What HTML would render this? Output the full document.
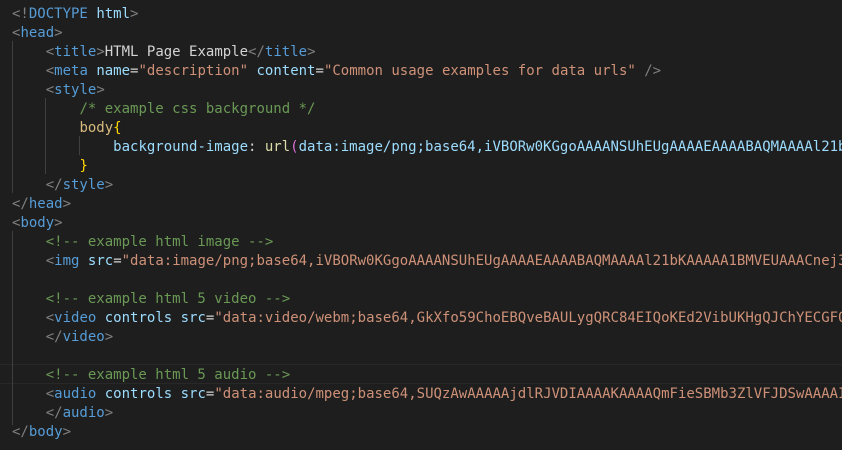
<!DOCTYPE html>
<html><head><style>
html,body{margin:0;padding:0;background:#1e1e1e;width:842px;height:450px;overflow:hidden}
pre{margin:0;padding:5px 0 0 12px;width:830px;height:445px;overflow:hidden;font-family:"DejaVu Sans Mono","Liberation Mono",monospace;font-size:14px;line-height:19px;color:#d4d4d4;white-space:pre;position:relative;z-index:2}
.b{color:#808080}.t{color:#569cd6}.a{color:#9cdcfe}.s{color:#ce9178}.c{color:#6a9955}.sel{color:#d7ba7d}.br{color:#ffd700}.f{color:#dcdcaa}.p{color:#da70d6}.u{color:#9cdcfe}
.g{position:absolute;width:1px;background:#404040;z-index:1}
.hl{position:absolute;left:0;right:0;top:364px;height:18px;border-top:1px solid #282828;border-bottom:1px solid #282828;z-index:0}
</style></head><body>
<div class="hl"></div>
<div class="g" style="left:12px;top:41px;height:152px"></div>
<div class="g" style="left:45px;top:98px;height:76px"></div>
<div class="g" style="left:79px;top:136px;height:19px"></div>
<div class="g" style="left:12px;top:231px;height:194px"></div>
<pre><span class="b">&lt;!</span><span class="t">DOCTYPE</span> <span class="a">html</span><span class="b">&gt;</span>
<span class="b">&lt;</span><span class="t">head</span><span class="b">&gt;</span>
    <span class="b">&lt;</span><span class="t">title</span><span class="b">&gt;</span>HTML Page Example<span class="b">&lt;/</span><span class="t">title</span><span class="b">&gt;</span>
    <span class="b">&lt;</span><span class="t">meta</span> <span class="a">name</span>=<span class="s">"description"</span> <span class="a">content</span>=<span class="s">"Common usage examples for data urls"</span> <span class="b">/&gt;</span>
    <span class="b">&lt;</span><span class="t">style</span><span class="b">&gt;</span>
        <span class="c">/* example css background */</span>
        <span class="sel">body</span><span class="br">{</span>
            <span class="a">background-image</span>: <span class="f">url</span><span class="p">(</span><span class="u">data:image/png;base64,iVBORw0KGgoAAAANSUhEUgAAAAEAAAABAQMAAAAl21bKAAAAA1BMVEUAAACnej3aAAAAAXRSTlMAQObYZgAAAApJREFUCNdjYAAAAAIAAeIhvDMAAAAASUVORK5CYII=</span><span class="p">)</span>;
        <span class="br">}</span>
    <span class="b">&lt;/</span><span class="t">style</span><span class="b">&gt;</span>
<span class="b">&lt;/</span><span class="t">head</span><span class="b">&gt;</span>
<span class="b">&lt;</span><span class="t">body</span><span class="b">&gt;</span>
    <span class="c">&lt;!-- example html image --&gt;</span>
    <span class="b">&lt;</span><span class="t">img</span> <span class="a">src</span>=<span class="s">"data:image/png;base64,iVBORw0KGgoAAAANSUhEUgAAAAEAAAABAQMAAAAl21bKAAAAA1BMVEUAAACnej3aAAAAAXRSTlMAQObYZgAAAApJREFUCNdjYAAAAAIAAeIhvDMAAAAASUVORK5CYII="</span>
 
    <span class="c">&lt;!-- example html 5 video --&gt;</span>
    <span class="b">&lt;</span><span class="t">video</span> <span class="a">controls</span> <span class="a">src</span>=<span class="s">"data:video/webm;base64,GkXfo59ChoEBQveBAULygQRC84EIQoKEd2VibUKHgQJChYECGFOAZwEAAAAAAAAA"</span>
    <span class="b">&lt;/</span><span class="t">video</span><span class="b">&gt;</span>
 
    <span class="c">&lt;!-- example html 5 audio --&gt;</span>
    <span class="b">&lt;</span><span class="t">audio</span> <span class="a">controls</span> <span class="a">src</span>=<span class="s">"data:audio/mpeg;base64,SUQzAwAAAAAjdlRJVDIAAAAKAAAAQmFieSBMb3ZlVFJDSwAAAAIAAAA"</span>
    <span class="b">&lt;/</span><span class="t">audio</span><span class="b">&gt;</span>
<span class="b">&lt;/</span><span class="t">body</span><span class="b">&gt;</span></pre>
</body></html>
